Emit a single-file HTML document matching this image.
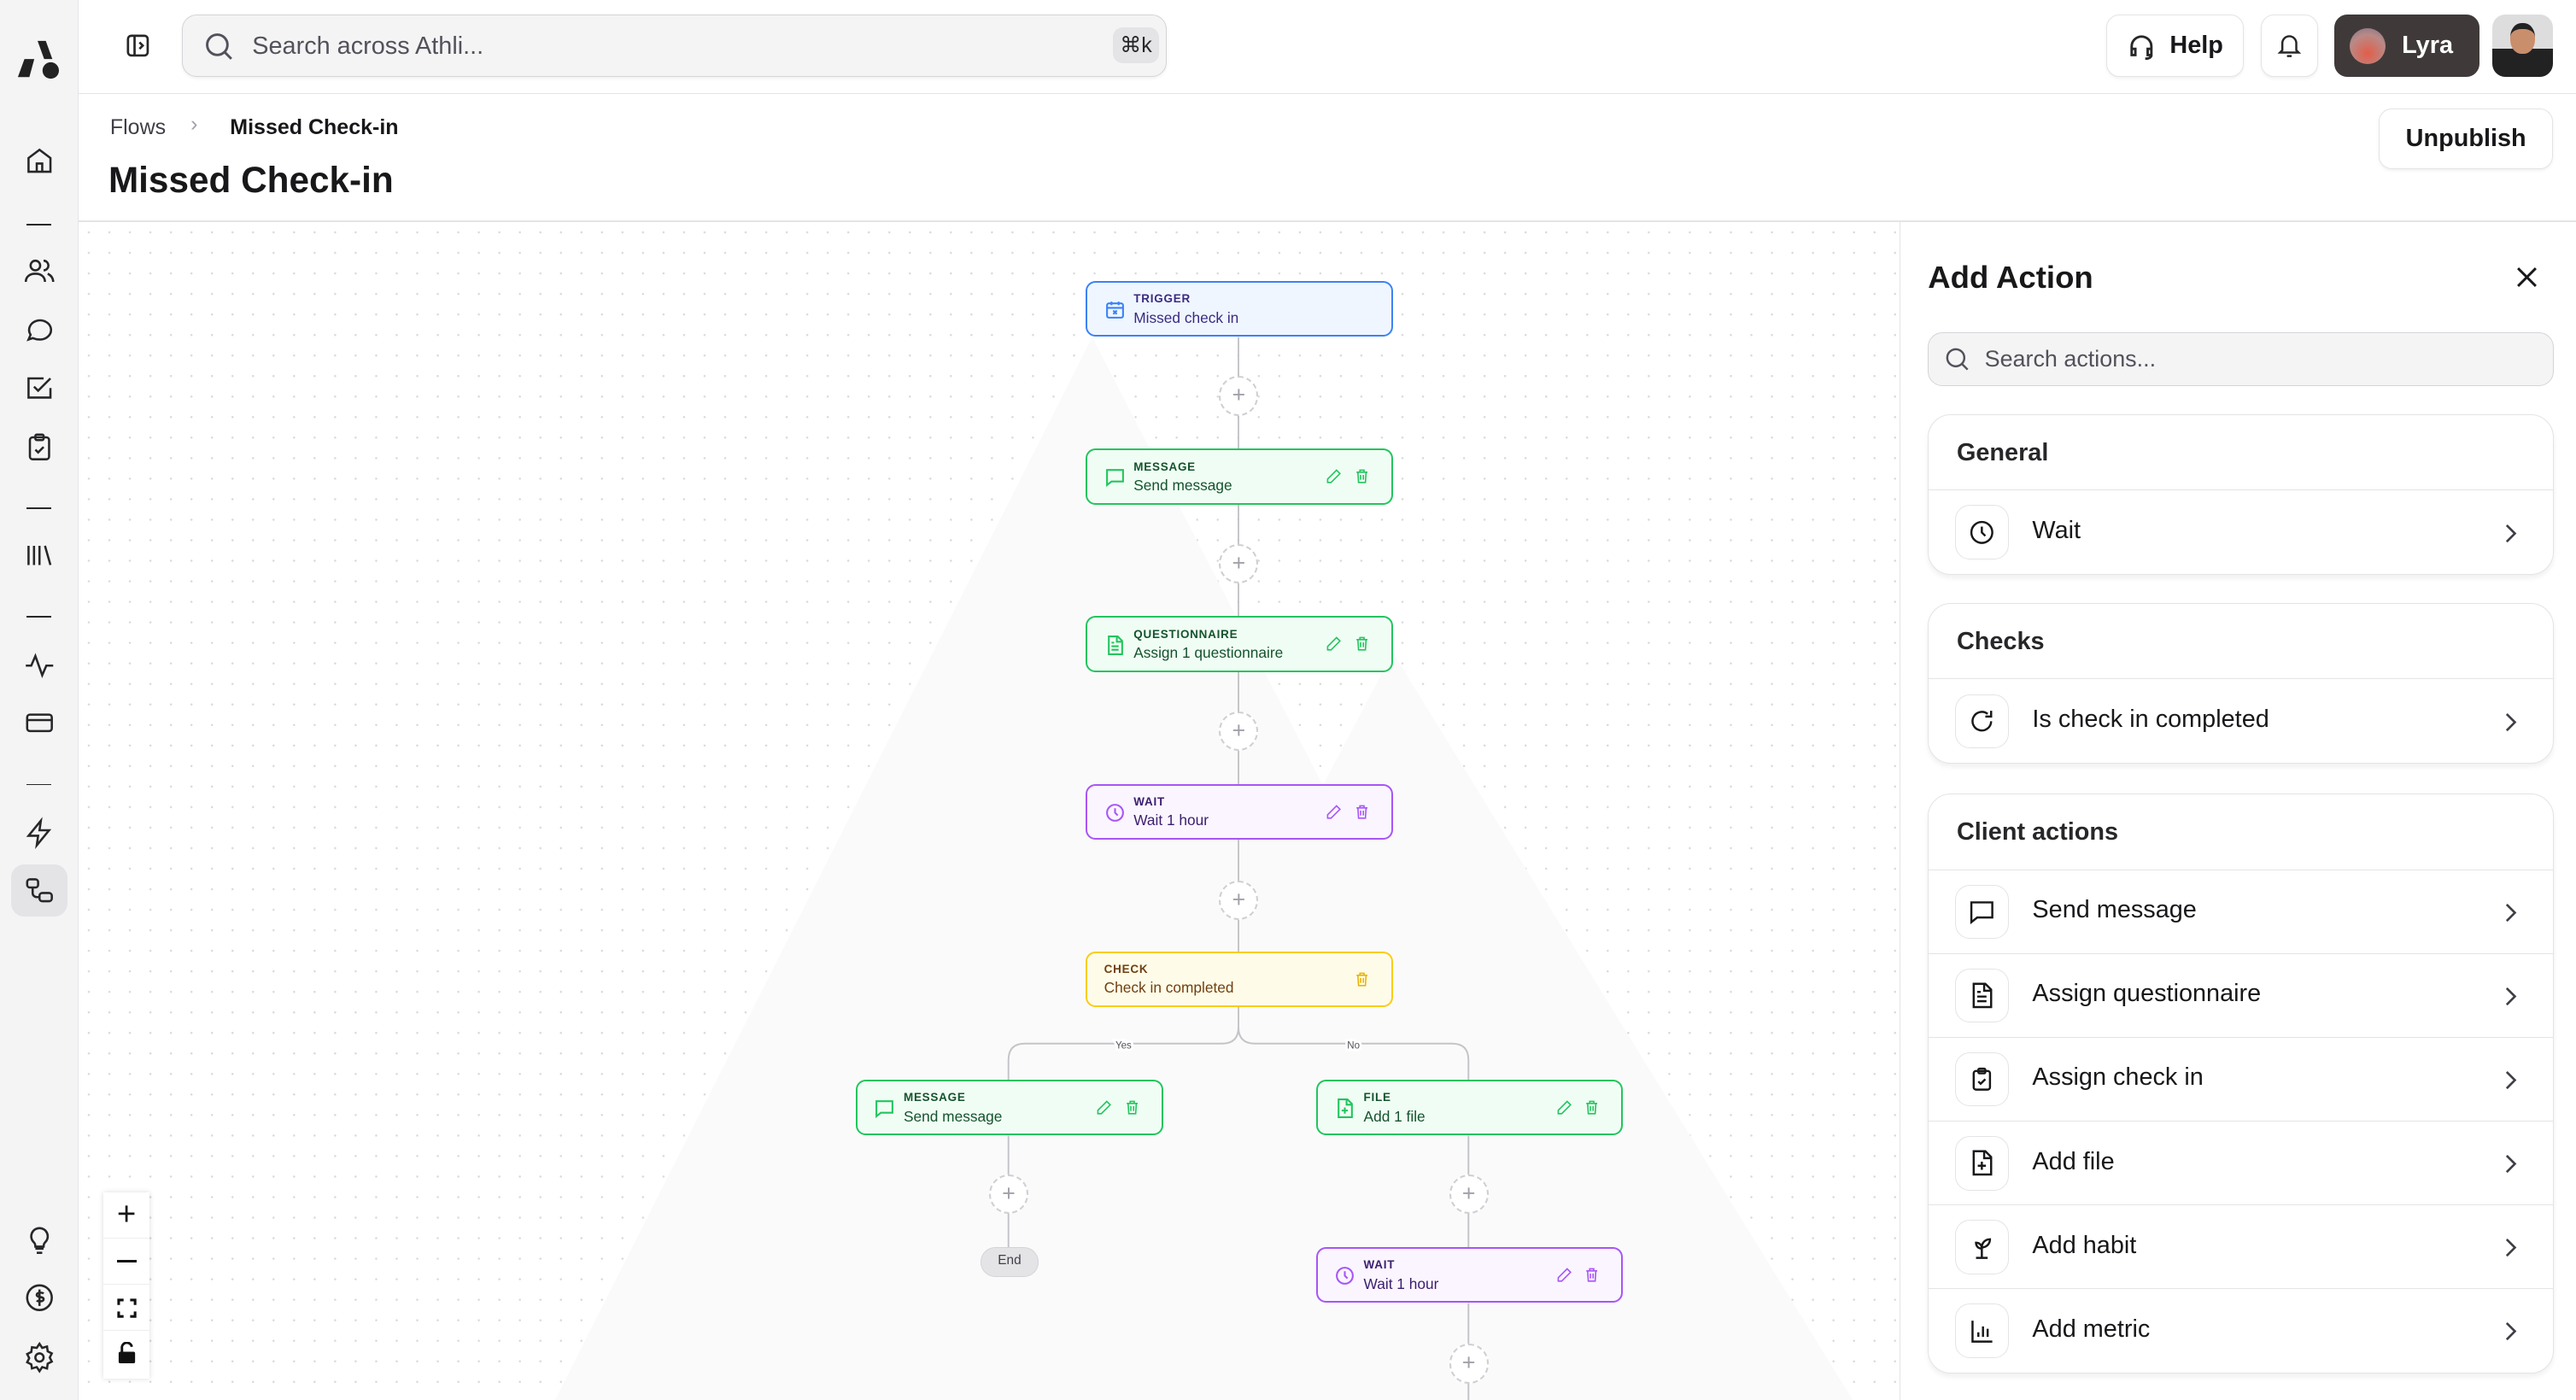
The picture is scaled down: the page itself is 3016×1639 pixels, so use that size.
<!DOCTYPE html>
<html><head><meta charset="utf-8"><style>
html{zoom:1.9235}
*{box-sizing:border-box;margin:0;padding:0}
body{width:1568px;height:852px;overflow:hidden;font-family:"Liberation Sans",sans-serif;color:#18181b;background:#fff;position:relative}
.abs{position:absolute}
.side{left:0;top:0;width:48px;height:852px;background:#f4f4f5;border-right:1px solid #e4e4e7}
.si{position:absolute;left:14px;width:20px;height:20px}
.sep{position:absolute;left:16px;width:15px;height:1px;background:#27272a}
.top{left:48px;top:0;right:0;height:57px;border-bottom:1px solid #e4e4e7;background:#fff}
.btn{position:absolute;border:1px solid #e4e4e7;border-radius:8px;background:#fff;box-shadow:0 1px 2px rgba(0,0,0,.06);display:flex;align-items:center;justify-content:center;font-weight:bold;font-size:15px}
.canvas{left:48px;top:135px;width:1108px;height:717px;background-color:#fff;background-image:radial-gradient(circle,#d8d8dc 0.5px,transparent 0.8px);background-size:12.5px 12.5px;overflow:hidden}
.node{position:absolute;width:187px;height:34px;border:1.5px solid;border-radius:6px}
.node .lb{position:absolute;left:28px;top:6px;font-size:7px;letter-spacing:.4px;font-weight:bold}
.node .tt{position:absolute;left:28px;top:16px;font-size:9px}
.node svg.ic{position:absolute;left:10px;top:10px;width:13px;height:13px}
.node .ac{position:absolute;top:11px;width:10px;height:10px}
.g{border-color:#22c55e;background:#f0fdf4;color:#14532d}
.p{border-color:#a855f7;background:#faf5ff;color:#3b1d6e}
.plus{position:absolute;width:24px;height:24px;border:1.2px dashed #cfcfd4;border-radius:50%;background:#fff;color:#a1a1aa;font-size:14px;line-height:21px;text-align:center}
.panel{left:1156px;top:135px;width:412px;height:717px;border-left:1px solid #e4e4e7;background:#fff}
.card{position:absolute;left:17px;width:381px;border:1px solid #e4e4e7;border-radius:14px;background:#fff;box-shadow:0 2px 3px rgba(0,0,0,.06);overflow:hidden}
.ch{height:46px;padding-left:17px;line-height:46px;font-weight:bold;font-size:15px;border-bottom:1px solid #e4e4e7;color:#27272a}
.row{height:51px;position:relative;border-bottom:1px solid #e4e4e7;font-size:15px}
.row:last-child{border-bottom:none}
.row .ib{position:absolute;left:16px;top:9px;width:33px;height:33px;border:1px solid #e4e4e7;border-radius:9px;display:flex;align-items:center;justify-content:center}
.row .nm{position:absolute;left:63px;top:16px}
.row .cv{position:absolute;right:22px;top:19px}
</style></head><body>

<div class="abs side">
 <svg class="abs" style="left:10px;top:24px" width="28" height="26" viewBox="0 0 28 26"><path d="M13 1h5l4 11h-5z" fill="#222"/><path d="M5 12h6l-3 11H1z" fill="#222"/><circle cx="21" cy="19" r="5" fill="#222"/></svg>
 <svg class="si" style="top:88px" viewBox="0 0 24 24" fill="none" stroke="#27272a" stroke-width="1.6"><path d="M4 10l8-6 8 6v10H4z M10 20v-6h4v6"/></svg>
 <div class="sep" style="top:136px"></div>
 <svg class="si" style="top:155px" viewBox="0 0 24 24" fill="none" stroke="#27272a" stroke-width="1.6"><circle cx="9" cy="8" r="3.5"/><path d="M2 20c0-4 3-6 7-6s7 2 7 6M15 4.5a3.5 3.5 0 010 7M18 14c2 1 4 3 4 6"/></svg>
 <svg class="si" style="top:191px" viewBox="0 0 24 24" fill="none" stroke="#27272a" stroke-width="1.6"><path d="M4 19l1.5-3.5A8 7 0 1112 19c-2 0-3.5-.4-5-1z"/></svg>
 <svg class="si" style="top:226px" viewBox="0 0 24 24" fill="none" stroke="#27272a" stroke-width="1.6"><path d="M20 12v7H4V5h11M8 11l3 3 9-9"/></svg>
 <svg class="si" style="top:262px" viewBox="0 0 24 24" fill="none" stroke="#27272a" stroke-width="1.6"><rect x="5" y="5" width="14" height="16" rx="2"/><rect x="9" y="3" width="6" height="4" rx="1"/><path d="M9 14l2 2 4-4"/></svg>
 <div class="sep" style="top:309px"></div>
 <svg class="si" style="top:328px" viewBox="0 0 24 24" fill="none" stroke="#27272a" stroke-width="1.6"><path d="M4 5v14M8 5v14M12 5v14M16 5l4 14"/></svg>
 <div class="sep" style="top:375px"></div>
 <svg class="si" style="top:395px" viewBox="0 0 24 24" fill="none" stroke="#27272a" stroke-width="1.6"><path d="M2 12h4l3-7 5 14 3-7h5"/></svg>
 <svg class="si" style="top:430px" viewBox="0 0 24 24" fill="none" stroke="#27272a" stroke-width="1.6"><rect x="3" y="6" width="18" height="12" rx="2"/><path d="M3 10h18"/></svg>
 <div class="sep" style="top:477px"></div>
 <svg class="si" style="top:497px" viewBox="0 0 24 24" fill="none" stroke="#27272a" stroke-width="1.6"><path d="M13 3L4 14h7l-1 7 9-11h-7z"/></svg>
 <div class="abs" style="left:7px;top:526px;width:34px;height:32px;border-radius:8px;background:#e4e4e7"></div>
 <svg class="si" style="top:532px" viewBox="0 0 24 24" fill="none" stroke="#27272a" stroke-width="1.6"><rect x="3" y="4" width="8" height="6" rx="2"/><rect x="12" y="14" width="9" height="6" rx="2"/><path d="M7 10v4a3 3 0 003 3h2"/></svg>
 <svg class="si" style="top:745px" viewBox="0 0 24 24" fill="none" stroke="#27272a" stroke-width="1.6"><path d="M9 18h6M10 21h4M12 3a6 6 0 00-4 10.5c1 1 1 2 1 3h6c0-1 0-2 1-3A6 6 0 0012 3z"/></svg>
 <svg class="si" style="top:780px" viewBox="0 0 24 24" fill="none" stroke="#27272a" stroke-width="1.6"><circle cx="12" cy="12" r="9"/><path d="M15 9c-1-1-5-1-5 1s5 1 5 3-4 2-5 1M12 6v12"/></svg>
 <svg class="si" style="top:816px" viewBox="0 0 24 24" fill="none" stroke="#27272a" stroke-width="1.6"><circle cx="12" cy="12" r="3"/><path d="M12 2l2 3 3.5-1 .5 3.5 3 1.5-1.5 3 1.5 3-3 1.5-.5 3.5-3.5-1-2 3-2-3-3.5 1L6 17l-3-1.5 1.5-3L3 9.5 6 8l.5-3.5L10 5z"/></svg>
</div>

<div class="abs top">
 <svg class="abs" style="left:28px;top:20px" width="16" height="16" viewBox="0 0 16 16" fill="none" stroke="#27272a" stroke-width="1.4"><rect x="2" y="2" width="12" height="12" rx="2"/><path d="M6 2v12M9 6l2 2-2 2"/></svg>
 <div class="abs" style="left:63px;top:9px;width:599px;height:38px;border:1px solid #d4d4d8;border-radius:9px;background:#f4f4f5;box-shadow:0 1px 2px rgba(0,0,0,.06)">
  <svg class="abs" style="left:12px;top:9px" width="19" height="19" viewBox="0 0 20 20" fill="none" stroke="#52525b" stroke-width="1.6"><circle cx="9" cy="9" r="6.5"/><path d="M14 14l4 4"/></svg>
  <span class="abs" style="left:42px;top:10px;font-size:15px;color:#52525b">Search across Athli...</span>
  <div class="abs" style="right:4px;top:7px;width:28px;height:22px;border-radius:6px;background:#e4e4e7;font-size:13px;line-height:22px;text-align:center;color:#27272a">⌘k</div>
 </div>
 <div class="btn" style="left:1234px;top:9px;width:84px;height:38px"><svg width="18" height="18" viewBox="0 0 24 24" fill="none" stroke="#27272a" stroke-width="2" style="margin-right:8px"><path d="M4 15v-3a8 8 0 0116 0v3M4 14h3v5H4zM17 14h3v5h-3zM20 19c0 2-2 3-5 3"/></svg>Help</div>
 <div class="btn" style="left:1328px;top:9px;width:35px;height:38px"><svg width="17" height="17" viewBox="0 0 24 24" fill="none" stroke="#27272a" stroke-width="1.8"><path d="M6 16V10a6 6 0 0112 0v6l2 2H4zM10 21h4"/></svg></div>
 <div class="abs" style="left:1373px;top:9px;width:88px;height:38px;border-radius:8px;background:#3f3a39;color:#fff;font-weight:bold;font-size:15px"><div class="abs" style="left:9px;top:8px;width:22px;height:22px;border-radius:50%;background:radial-gradient(circle at 50% 70%,#e35d4a,#b98a86 60%,#7d6f8a)"></div><span class="abs" style="left:41px;top:10px">Lyra</span></div>
 <div class="abs" style="left:1469px;top:9px;width:37px;height:38px;border-radius:8px;background:linear-gradient(#ddd 0,#ddd 55%,#222 55%);overflow:hidden"><div class="abs" style="left:11px;top:5px;width:15px;height:19px;border-radius:45%;background:#c98e6c;border-top:4px solid #222"></div></div>
</div>

<div class="abs" style="left:67px;top:70px;font-size:13px;color:#3f3f46">Flows</div>
<div class="abs" style="left:116px;top:68px;font-size:13px;color:#a1a1aa">›</div>
<div class="abs" style="left:140px;top:70px;font-size:13px;font-weight:bold;color:#18181b">Missed Check-in</div>
<div class="abs" style="left:66px;top:97px;font-size:22px;font-weight:bold">Missed Check-in</div>
<div class="btn" style="left:1448px;top:66px;width:106px;height:37px">Unpublish</div>
<div class="abs" style="left:48px;top:134px;width:1520px;height:1px;background:#e4e4e7"></div>

<div class="abs canvas">
 <svg class="abs" style="left:0;top:0" width="1108" height="717">
  <polygon points="617,70 290,717 950,717" fill="#fafafa"/>
  <polygon points="800,262 560,717 1080,717" fill="#fafafa"/>
  <g stroke="#c4c4c8" stroke-width="1" fill="none">
   <path d="M706 70V478M706 478V490Q706 500 696 500H576Q566 500 566 510V522M706 490Q706 500 716 500H836Q846 500 846 510V522M566 556V624M846 556V624M846 658V717"/>
  </g>
  <text x="636" y="503" font-size="6" fill="#52525b" font-family="Liberation Sans" text-anchor="middle" style="paint-order:stroke" stroke="#fff" stroke-width="3">Yes</text>
  <text x="776" y="503" font-size="6" fill="#52525b" font-family="Liberation Sans" text-anchor="middle" style="paint-order:stroke" stroke="#fff" stroke-width="3">No</text>
 </svg>

 <div class="node" style="left:613px;top:36px;border-color:#3b82f6;background:#eff6ff;color:#3b2a80">
  <svg class="ic" viewBox="0 0 24 24" fill="none" stroke="#3b82f6" stroke-width="2"><rect x="3" y="5" width="18" height="16" rx="2"/><path d="M3 10h18M8 3v4M16 3v4M10 13l4 4M14 13l-4 4"/></svg>
  <div class="lb">TRIGGER</div><div class="tt">Missed check in</div></div>

 <div class="plus" style="left:694px;top:94px">+</div>
 <div class="node g" style="left:613px;top:138px">
  <svg class="ic" viewBox="0 0 24 24" fill="none" stroke="#22c55e" stroke-width="2"><path d="M3 4h18v13H8l-5 4z"/></svg>
  <div class="lb">MESSAGE</div><div class="tt">Send message</div>
  <svg class="ac" style="left:145px" viewBox="0 0 24 24" fill="none" stroke="#22c55e" stroke-width="2"><path d="M16 3l5 5L8 21H3v-5z"/></svg>
  <svg class="ac" style="left:162px" viewBox="0 0 24 24" fill="none" stroke="#22c55e" stroke-width="2"><path d="M4 6h16M9 6V3h6v3M6 6l1 15h10l1-15M10 10v7M14 10v7"/></svg></div>

 <div class="plus" style="left:694px;top:196px">+</div>
 <div class="node g" style="left:613px;top:240px">
  <svg class="ic" viewBox="0 0 24 24" fill="none" stroke="#22c55e" stroke-width="2"><path d="M5 2h10l5 5v15H5zM14 2v6h6M8 13h8M8 17h8M8 9h3"/></svg>
  <div class="lb">QUESTIONNAIRE</div><div class="tt">Assign 1 questionnaire</div>
  <svg class="ac" style="left:145px" viewBox="0 0 24 24" fill="none" stroke="#22c55e" stroke-width="2"><path d="M16 3l5 5L8 21H3v-5z"/></svg>
  <svg class="ac" style="left:162px" viewBox="0 0 24 24" fill="none" stroke="#22c55e" stroke-width="2"><path d="M4 6h16M9 6V3h6v3M6 6l1 15h10l1-15M10 10v7M14 10v7"/></svg></div>

 <div class="plus" style="left:694px;top:298px">+</div>
 <div class="node p" style="left:613px;top:342px">
  <svg class="ic" viewBox="0 0 24 24" fill="none" stroke="#a855f7" stroke-width="2"><circle cx="12" cy="12" r="9"/><path d="M12 7v5l3 3"/></svg>
  <div class="lb">WAIT</div><div class="tt">Wait 1 hour</div>
  <svg class="ac" style="left:145px" viewBox="0 0 24 24" fill="none" stroke="#a855f7" stroke-width="2"><path d="M16 3l5 5L8 21H3v-5z"/></svg>
  <svg class="ac" style="left:162px" viewBox="0 0 24 24" fill="none" stroke="#a855f7" stroke-width="2"><path d="M4 6h16M9 6V3h6v3M6 6l1 15h10l1-15M10 10v7M14 10v7"/></svg></div>

 <div class="plus" style="left:694px;top:401px">+</div>
 <div class="node" style="left:613px;top:444px;border-color:#facc15;background:#fefce8;color:#713f12">
  <div class="lb" style="left:10px">CHECK</div><div class="tt" style="left:10px">Check in completed</div>
  <svg class="ac" style="left:162px" viewBox="0 0 24 24" fill="none" stroke="#eab308" stroke-width="2"><path d="M4 6h16M9 6V3h6v3M6 6l1 15h10l1-15M10 10v7M14 10v7"/></svg></div>

 <div class="node g" style="left:473px;top:522px">
  <svg class="ic" viewBox="0 0 24 24" fill="none" stroke="#22c55e" stroke-width="2"><path d="M3 4h18v13H8l-5 4z"/></svg>
  <div class="lb">MESSAGE</div><div class="tt">Send message</div>
  <svg class="ac" style="left:145px" viewBox="0 0 24 24" fill="none" stroke="#22c55e" stroke-width="2"><path d="M16 3l5 5L8 21H3v-5z"/></svg>
  <svg class="ac" style="left:162px" viewBox="0 0 24 24" fill="none" stroke="#22c55e" stroke-width="2"><path d="M4 6h16M9 6V3h6v3M6 6l1 15h10l1-15M10 10v7M14 10v7"/></svg></div>
 <div class="node g" style="left:753px;top:522px">
  <svg class="ic" viewBox="0 0 24 24" fill="none" stroke="#22c55e" stroke-width="2"><path d="M5 2h10l5 5v15H5zM14 2v6h6M12 11v7M8.5 14.5h7"/></svg>
  <div class="lb">FILE</div><div class="tt">Add 1 file</div>
  <svg class="ac" style="left:145px" viewBox="0 0 24 24" fill="none" stroke="#22c55e" stroke-width="2"><path d="M16 3l5 5L8 21H3v-5z"/></svg>
  <svg class="ac" style="left:162px" viewBox="0 0 24 24" fill="none" stroke="#22c55e" stroke-width="2"><path d="M4 6h16M9 6V3h6v3M6 6l1 15h10l1-15M10 10v7M14 10v7"/></svg></div>

 <div class="plus" style="left:554px;top:580px">+</div>
 <div class="plus" style="left:834px;top:580px">+</div>
 <div class="abs" style="left:549px;top:624px;width:35px;height:18px;border-radius:9px;background:#e4e4e7;border:1px solid #d4d4d8;font-size:8px;text-align:center;line-height:16px;color:#3f3f46">End</div>
 <div class="node p" style="left:753px;top:624px">
  <svg class="ic" viewBox="0 0 24 24" fill="none" stroke="#a855f7" stroke-width="2"><circle cx="12" cy="12" r="9"/><path d="M12 7v5l3 3"/></svg>
  <div class="lb">WAIT</div><div class="tt">Wait 1 hour</div>
  <svg class="ac" style="left:145px" viewBox="0 0 24 24" fill="none" stroke="#a855f7" stroke-width="2"><path d="M16 3l5 5L8 21H3v-5z"/></svg>
  <svg class="ac" style="left:162px" viewBox="0 0 24 24" fill="none" stroke="#a855f7" stroke-width="2"><path d="M4 6h16M9 6V3h6v3M6 6l1 15h10l1-15M10 10v7M14 10v7"/></svg></div>
 <div class="plus" style="left:834px;top:683px">+</div>

 <div class="abs" style="left:15px;top:591px;width:28px;height:113px;background:#fff;box-shadow:0 0 3px rgba(0,0,0,.15)">
  <div style="height:28px;border-bottom:1px solid #eee;text-align:center;font-size:20px;line-height:27px">+</div>
  <div style="height:28px;border-bottom:1px solid #eee;position:relative"><div class="abs" style="left:8px;top:13px;width:12px;height:1.6px;background:#111"></div></div>
  <div style="height:28px;border-bottom:1px solid #eee;position:relative"><svg class="abs" style="left:8px;top:8px" width="12" height="12" viewBox="0 0 12 12" fill="none" stroke="#111" stroke-width="1.6"><path d="M1 4V1h3M8 1h3v3M11 8v3H8M4 11H1V8"/></svg></div>
  <div style="height:28px;position:relative"><svg class="abs" style="left:8px;top:7px" width="12" height="13" viewBox="0 0 12 13"><rect x="1" y="6" width="10" height="7" rx="1" fill="#111"/><path d="M3 6V4a3 3 0 016-1" stroke="#111" stroke-width="1.5" fill="none"/></svg></div>
 </div>
</div>

<div class="abs panel">
 <div class="abs" style="left:17px;top:23px;font-size:19px;font-weight:bold">Add Action</div>
 <svg class="abs" style="left:375px;top:27px" width="13" height="13" viewBox="0 0 12 12" stroke="#18181b" stroke-width="1.4"><path d="M1 1l10 10M11 1L1 11"/></svg>
 <div class="abs" style="left:17px;top:67px;width:381px;height:33px;border:1px solid #d4d4d8;border-radius:9px;background:#f4f4f5">
  <svg class="abs" style="left:9px;top:8px" width="16" height="16" viewBox="0 0 20 20" fill="none" stroke="#52525b" stroke-width="1.6"><circle cx="9" cy="9" r="6.5"/><path d="M14 14l4 4"/></svg>
  <span class="abs" style="left:34px;top:8px;font-size:14px;color:#52525b">Search actions...</span></div>

 <div class="card" style="top:117px"><div class="ch">General</div>
  <div class="row"><div class="ib"><svg width="17" height="17" viewBox="0 0 24 24" fill="none" stroke="#18181b" stroke-width="1.8"><circle cx="12" cy="12" r="9"/><path d="M12 7v5l3 3"/></svg></div><span class="nm">Wait</span><span class="cv"><svg width="8" height="12" viewBox="0 0 8 12" fill="none" stroke="#3f3f46" stroke-width="1.4"><path d="M2 1l5 5-5 5"/></svg></span></div></div>

 <div class="card" style="top:232px"><div class="ch">Checks</div>
  <div class="row"><div class="ib"><svg width="17" height="17" viewBox="0 0 24 24" fill="none" stroke="#18181b" stroke-width="1.8"><path d="M20 12a8 8 0 11-3-6.3M20 3v5h-5"/></svg></div><span class="nm">Is check in completed</span><span class="cv"><svg width="8" height="12" viewBox="0 0 8 12" fill="none" stroke="#3f3f46" stroke-width="1.4"><path d="M2 1l5 5-5 5"/></svg></span></div></div>

 <div class="card" style="top:348px"><div class="ch">Client actions</div>
  <div class="row"><div class="ib"><svg width="17" height="17" viewBox="0 0 24 24" fill="none" stroke="#18181b" stroke-width="1.8"><path d="M3 4h18v13H8l-5 4z"/></svg></div><span class="nm">Send message</span><span class="cv"><svg width="8" height="12" viewBox="0 0 8 12" fill="none" stroke="#3f3f46" stroke-width="1.4"><path d="M2 1l5 5-5 5"/></svg></span></div>
  <div class="row"><div class="ib"><svg width="17" height="17" viewBox="0 0 24 24" fill="none" stroke="#18181b" stroke-width="1.8"><path d="M5 2h10l5 5v15H5zM14 2v6h6M8 13h8M8 17h8M8 9h3"/></svg></div><span class="nm">Assign questionnaire</span><span class="cv"><svg width="8" height="12" viewBox="0 0 8 12" fill="none" stroke="#3f3f46" stroke-width="1.4"><path d="M2 1l5 5-5 5"/></svg></span></div>
  <div class="row"><div class="ib"><svg width="17" height="17" viewBox="0 0 24 24" fill="none" stroke="#18181b" stroke-width="1.8"><rect x="5" y="5" width="14" height="16" rx="2"/><rect x="9" y="3" width="6" height="4" rx="1"/><path d="M9 14l2 2 4-4"/></svg></div><span class="nm">Assign check in</span><span class="cv"><svg width="8" height="12" viewBox="0 0 8 12" fill="none" stroke="#3f3f46" stroke-width="1.4"><path d="M2 1l5 5-5 5"/></svg></span></div>
  <div class="row"><div class="ib"><svg width="17" height="17" viewBox="0 0 24 24" fill="none" stroke="#18181b" stroke-width="1.8"><path d="M5 2h10l5 5v15H5zM14 2v6h6M12 11v7M8.5 14.5h7"/></svg></div><span class="nm">Add file</span><span class="cv"><svg width="8" height="12" viewBox="0 0 8 12" fill="none" stroke="#3f3f46" stroke-width="1.4"><path d="M2 1l5 5-5 5"/></svg></span></div>
  <div class="row"><div class="ib"><svg width="17" height="17" viewBox="0 0 24 24" fill="none" stroke="#18181b" stroke-width="1.8"><path d="M7 21h10M12 21v-9M12 12c0-4 3-7 7-7 0 4-3 7-7 7zM12 13c0-3-2-5-5-5 0 3 2 5 5 5z"/></svg></div><span class="nm">Add habit</span><span class="cv"><svg width="8" height="12" viewBox="0 0 8 12" fill="none" stroke="#3f3f46" stroke-width="1.4"><path d="M2 1l5 5-5 5"/></svg></span></div>
  <div class="row"><div class="ib"><svg width="17" height="17" viewBox="0 0 24 24" fill="none" stroke="#18181b" stroke-width="1.8"><path d="M4 3v18h17M9 17v-4M13 17V8M17 17v-7"/></svg></div><span class="nm">Add metric</span><span class="cv"><svg width="8" height="12" viewBox="0 0 8 12" fill="none" stroke="#3f3f46" stroke-width="1.4"><path d="M2 1l5 5-5 5"/></svg></span></div>
 </div>
</div>
</body></html>
